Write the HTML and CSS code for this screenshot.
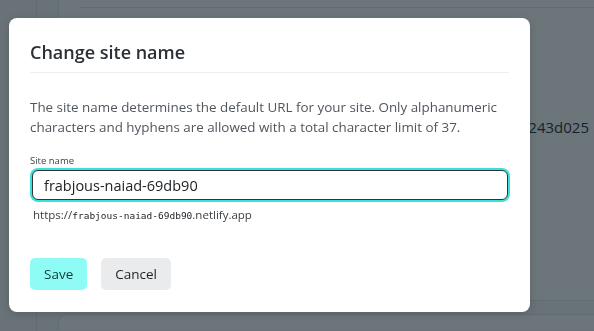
FILE: index.html
```html
<!DOCTYPE html>
<html lang="en">
<head>
    <meta charset="UTF-8">
    <meta name="viewport" content="width=device-width, initial-scale=1.0">
    <title>Change site name</title>
    <link rel="stylesheet" href="styles.css">
</head>
<body>
    <div class="page">
        <div class="sidebar"></div>
        <div class="main">
            <div class="card">
                <div class="card-row"></div>
                <div class="card-row card-row-id">
                    <span class="site-id">-243d025</span>
                </div>
            </div>
            <div class="card card-next"></div>
        </div>
    </div>

    <div class="backdrop">
        <div class="modal">
            <h2 class="modal-title">Change site name</h2>

            <p class="modal-text">
                The site name determines the default URL for your site. Only alphanumeric
                characters and hyphens are allowed with a total character limit of 37.
            </p>

            <form id="site-name-form">
                <div class="form-group">
                    <label for="siteName">Site name</label>
                    <input type="text" id="siteName" value="frabjous-naiad-69db90">
                    <div class="url-hint">https://<code id="url-name">frabjous-naiad-69db90</code>.netlify.app</div>
                </div>

                <div class="actions">
                    <button type="submit" class="btn btn-primary">Save</button>
                    <button type="button" class="btn btn-secondary">Cancel</button>
                </div>
            </form>
        </div>
    </div>

    <script>
        document.getElementById('siteName').addEventListener('input', function() {
            document.getElementById('url-name').textContent = this.value;
        });
        document.getElementById('site-name-form').addEventListener('submit', function(e) {
            e.preventDefault();
        });
    </script>
</body>
</html>
```

FILE: styles.css
```css
* {
    box-sizing: border-box;
}
html, body {
    height: 100%;
}
body {
    margin: 0;
    font-family: "Open Sans", "Noto Sans", sans-serif;
    background-color: #f5f6f7;
    overflow: hidden;
}

/* page behind the dialog */
.page {
    display: flex;
    height: 100%;
}
.sidebar {
    width: 37px;
    border-right: 1px solid #dfe2e5;
}
.main {
    flex: 1;
    padding-left: 21px;
}
.card {
    margin-top: -20px;
    height: 321px;
    background-color: #fff;
    border: 1px solid #e3e6e9;
    border-right: none;
    border-radius: 8px 0 0 8px;
    padding: 0 0 0 21px;
}
.card-row {
    height: 27px;
    border-bottom: 1px solid #e6e8ea;
}
.card-row-id {
    border-bottom: none;
    height: auto;
    padding-top: 108px;
    text-align: right;
    padding-right: 5px;
}
.site-id {
    font-size: 15px;
    line-height: 20px;
    color: #1f2a30;
}
.card-next {
    margin-top: 13px;
    height: 16px;
    border-bottom: none;
    border-radius: 8px 0 0 0;
}

/* dialog */
.backdrop {
    position: fixed;
    inset: 0;
    background-color: rgba(14, 30, 37, 0.61);
}
.modal {
    position: absolute;
    left: 9px;
    top: 18px;
    width: 521px;
    height: 294px;
    background-color: #fff;
    border-radius: 8px;
    padding: 22px 21px 21px;
    box-shadow: 0 2px 8px rgba(0, 0, 0, 0.15);
}
.modal-title {
    margin: 0;
    padding-bottom: 8px;
    border-bottom: 1px solid #eeeff0;
    font-size: 18px;
    line-height: 24px;
    font-weight: 600;
    color: #2a3035;
}
.modal-text {
    margin: 24px 0 0;
    font-size: 13.4px;
    line-height: 20px;
    color: #50565d;
}
.form-group {
    margin-top: 17px;
}
label {
    display: block;
    font-size: 9.5px;
    line-height: 13px;
    color: #3c4147;
}
input {
    display: block;
    width: 476px;
    height: 30px;
    margin: 3px 0 0 2px;
    padding: 0 11px;
    border: 1px solid #2f3439;
    border-radius: 6px;
    box-shadow: 0 0 0 2px #3be0da;
    font-family: "Open Sans", "Noto Sans", sans-serif;
    font-size: 14.5px;
    color: #202427;
    outline: none;
}
.url-hint {
    margin-top: 7px;
    padding-left: 3px;
    font-size: 11.5px;
    line-height: 16px;
    color: #3b4046;
}
.url-hint code {
    font-family: "DejaVu Sans Mono", monospace;
    font-size: 9.5px;
    color: #23272b;
}
.actions {
    display: flex;
    gap: 14px;
    margin-top: 34px;
}
.btn {
    height: 32px;
    padding: 0 14px;
    border: none;
    border-radius: 5px;
    font-family: "Open Sans", "Noto Sans", sans-serif;
    font-size: 13.5px;
    color: #1b2226;
    cursor: pointer;
}
.btn-primary {
    background-color: #8ffbf5;
    color: #0f3a3a;
}
.btn-secondary {
    background-color: #eaebec;
}
```
